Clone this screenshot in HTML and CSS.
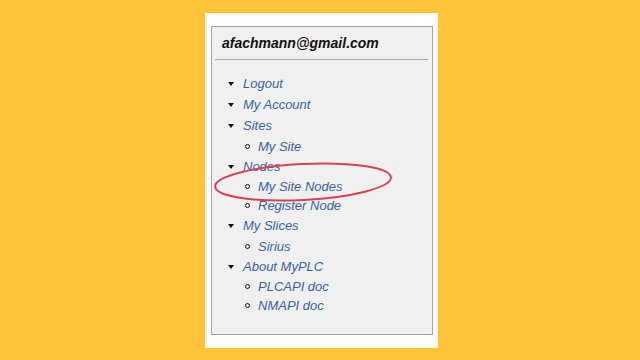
FILE: index.html
```html
<!DOCTYPE html>
<html lang="en">
<head>
    <meta charset="UTF-8">
    <meta name="viewport" content="width=device-width, initial-scale=1.0">
    <title>MyPLC</title>
    <link rel="stylesheet" href="styles.css">
</head>
<body>

    <div class="card">
        <div class="panel">
            <h2 class="user">afachmann@gmail.com</h2>
            <hr class="divider">

            <ul class="menu">
                <li><a href="#">Logout</a></li>
                <li><a href="#">My Account</a></li>
                <li><a href="#">Sites</a>
                    <ul class="sub">
                        <li><a href="#">My Site</a></li>
                    </ul>
                </li>
                <li><a href="#">Nodes</a>
                    <ul class="sub">
                        <li><a href="#">My Site Nodes</a></li>
                        <li><a href="#">Register Node</a></li>
                    </ul>
                </li>
                <li><a href="#">My Slices</a>
                    <ul class="sub">
                        <li><a href="#">Sirius</a></li>
                    </ul>
                </li>
                <li><a href="#">About MyPLC</a>
                    <ul class="sub">
                        <li><a href="#">PLCAPI doc</a></li>
                        <li><a href="#">NMAPI doc</a></li>
                    </ul>
                </li>
            </ul>

            <!-- hand drawn highlight -->
            <svg class="circle" width="190" height="50" viewBox="0 0 190 50">
                <ellipse cx="92" cy="25" rx="88" ry="18" transform="rotate(-3 92 25)" fill="none" stroke="#d9414f" stroke-width="2"/>
            </svg>
        </div>
    </div>

</body>
</html>
```

FILE: styles.css
```css
body {
    margin: 0;
    background-color: #ffc43a;
    font-family: 'Liberation Sans', Arial, sans-serif;
    min-height: 360px;
}

.card {
    background-color: #fff;
    margin-left: 205px;
    margin-top: 13px;
    width: 233px;
    height: 335px;
    padding: 13px 5px 0 6px;
    box-sizing: border-box;
    display: inline-block;
}

.panel {
    position: relative;
    background-color: #f0f0f0;
    border: 1px solid #a3a3a3;
    height: 309px;
    box-sizing: border-box;
}

.user {
    margin: 0;
    padding: 7px 0 0 10px;
    font-size: 14px;
    line-height: 18px;
    font-weight: bold;
    font-style: italic;
    color: #111;
}

.divider {
    margin: 7px 4px 0 3px;
    border: none;
    border-top: 1px solid #a8a8a8;
    height: 0;
}

.menu {
    list-style-type: none;
    margin: 13px 0 0 0;
    padding: 0 0 0 31px;
}

.menu li {
    position: relative;
    font-size: 13px;
    line-height: 21.2px;
}

.menu > li::before {
    content: "";
    position: absolute;
    left: -15px;
    top: 9px;
    border-left: 3.5px solid transparent;
    border-right: 3.5px solid transparent;
    border-top: 4px solid #111;
}

.menu a {
    color: #3a62a0;
    font-style: italic;
    text-decoration: none;
}

.sub {
    list-style-type: none;
    margin: 0;
    padding: 0 0 0 15px;
}

.sub li {
    line-height: 19.2px;
}

.sub li::before {
    content: "";
    position: absolute;
    left: -13px;
    top: 7px;
    width: 3px;
    height: 3px;
    border: 1px solid #111;
    border-radius: 50%;
}

.circle {
    position: absolute;
    left: -1px;
    top: 130px;
}
```
